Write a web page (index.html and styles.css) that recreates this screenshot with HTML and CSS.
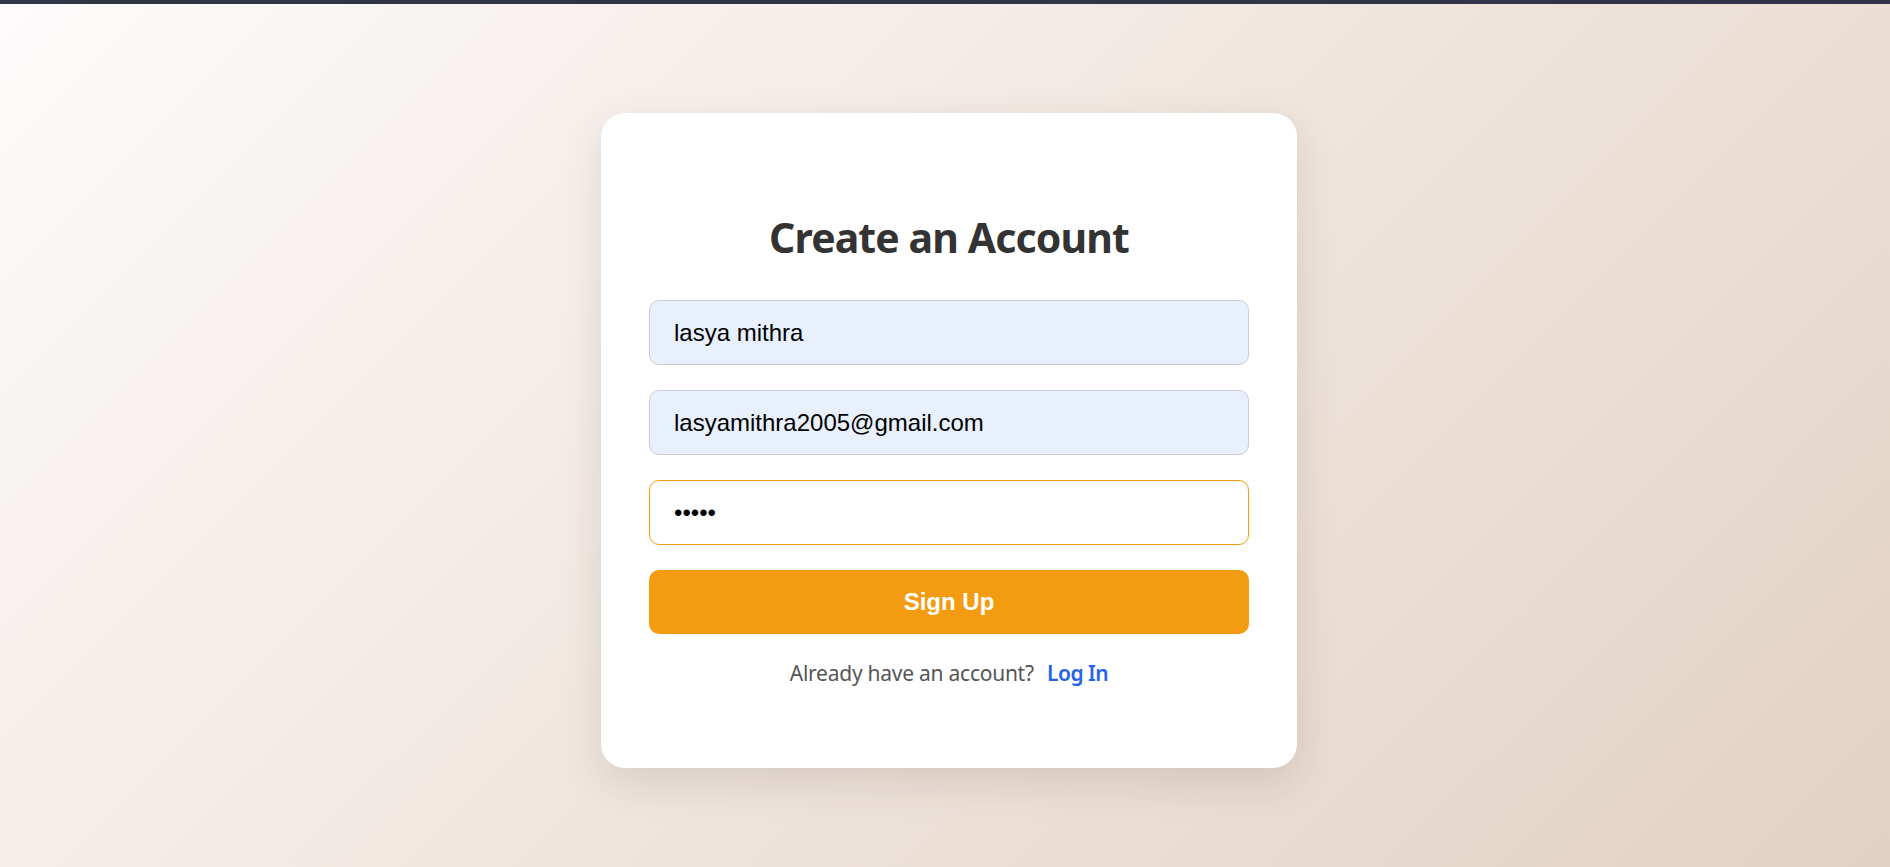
FILE: index.html
```html
<!DOCTYPE html>
<html lang="en">
<head>
<meta charset="utf-8">
<title>Create an Account</title>
<link rel="stylesheet" href="styles.css">
</head>
<body>
<div class="topbar"></div>
<main class="page">
  <section class="card">
    <h1 class="title">Create an Account</h1>
    <form class="form">
      <input class="field field-filled" type="text" value="lasya mithra">
      <input class="field field-filled" type="email" value="lasyamithra2005@gmail.com">
      <input class="field field-focus" type="password" value="abcde">
      <button class="btn" type="button">Sign Up</button>
    </form>
    <p class="switch">Already have an account? <a class="link" href="#">Log In</a></p>
  </section>
</main>
</body>
</html>
```
FILE: styles.css
```css
* { box-sizing: border-box; }
html, body { margin: 0; padding: 0; }
body {
  min-height: 100vh;
  background: linear-gradient(135deg, #fdfbfb 0%, #e2d1c3 100%);
  font-family: "Noto Sans", "Open Sans", sans-serif;
  overflow: hidden;
}
.topbar {
  height: 4px;
  background: #2f3546;
}
.page {
  min-height: calc(100vh - 4px);
  display: flex;
  align-items: flex-start;
  justify-content: center;
  padding: 109px 0 0 8px;
}
.card {
  width: 696px;
  height: 655px;
  background: #ffffff;
  border-radius: 24px;
  box-shadow: 0 14px 40px rgba(60, 40, 20, 0.13);
  padding: 100px 48px 0 48px;
}
.title {
  margin: 0 0 38px 0;
  text-align: center;
  font-size: 41px;
  line-height: 1.2;
  font-weight: 700;
  letter-spacing: -0.9px;
  color: #333333;
}
.form {
  display: flex;
  flex-direction: column;
  gap: 25px;
  margin: 0;
}
.field {
  display: block;
  width: 100%;
  height: 65px;
  padding: 0 24px;
  border: 1px solid #c9ccd3;
  border-radius: 10px;
  font-family: "Liberation Sans", Arial, sans-serif;
  font-size: 24px;
  color: #000000;
  background: #ffffff;
  outline: none;
}
.field-filled {
  background: #e8f0fe;
}
.field-focus {
  border-color: #f39c12;
}
.btn {
  display: block;
  width: 100%;
  height: 64px;
  border: none;
  border-radius: 10px;
  background: #f39c12;
  color: #ffffff;
  font-family: "Liberation Sans", Arial, sans-serif;
  font-size: 24px;
  font-weight: 700;
  cursor: pointer;
}
.switch {
  margin: 24px 0 0 0;
  text-align: center;
  font-size: 21px;
  line-height: 1.5;
  letter-spacing: -0.25px;
  color: #555555;
}
.link {
  margin-left: 8px;
  color: #2563eb;
  font-weight: 600;
  letter-spacing: -0.5px;
  text-decoration: none;
}
```
